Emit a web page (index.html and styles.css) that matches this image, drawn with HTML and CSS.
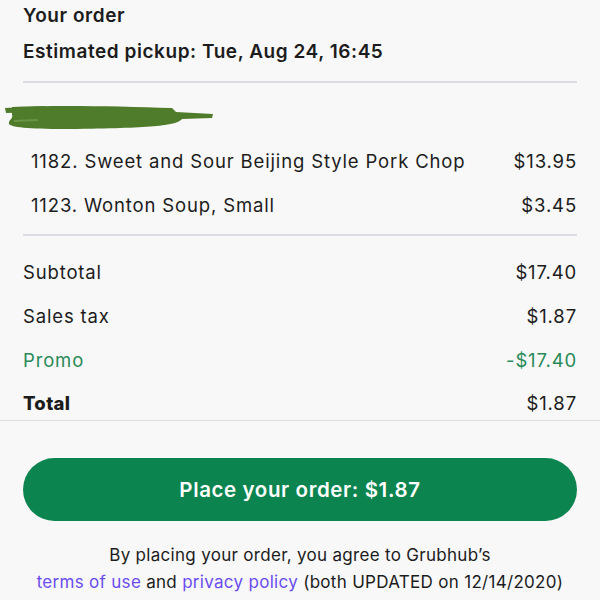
FILE: index.html
```html
<!DOCTYPE html>
<html>
<head>
<meta charset="utf-8">
<link rel="stylesheet" href="styles.css">
</head>
<body>
<div class="page">
  <section class="header">
    <div class="title">Your order</div>
    <div class="pickup">Estimated pickup: Tue, Aug 24, 16:45</div>
  </section>
  <hr class="divider">
  <div class="scribble">
    <svg width="220" height="26" viewBox="0 0 220 26">
      <path d="M12 3 C50 1 120 2 172 4 L176 8 L213 10 L212 14 L182 15 C176 22 150 24 70 25 C35 25 12 24 9 20 C8 16 14 14 12 11 Z" fill="#4f7c2b"/>
      <path d="M5 4 L45 2 L46 8 L6 9 Z" fill="#4f7c2b"/>
      <path d="M14 16 L38 15 L38 17 L14 18 Z" fill="#6a9448"/>
    </svg>
  </div>
  <section class="items">
    <div class="row item"><span>1182. Sweet and Sour Beijing Style Pork Chop</span><span>$13.95</span></div>
    <div class="row item"><span>1123. Wonton Soup, Small</span><span>$3.45</span></div>
  </section>
  <hr class="divider">
  <section class="totals">
    <div class="row"><span>Subtotal</span><span>$17.40</span></div>
    <div class="row"><span>Sales tax</span><span>$1.87</span></div>
    <div class="row promo"><span>Promo</span><span>-$17.40</span></div>
    <div class="row total"><span class="strong">Total</span><span>$1.87</span></div>
  </section>
  <div class="footer">
    <button class="place">Place your order: $1.87</button>
    <p class="legal">By placing your order, you agree to Grubhub’s<br><a class="link">terms of use</a> and <a class="link">privacy policy</a> (both UPDATED on 12/14/2020)</p>
  </div>
</div>
</body>
</html>
```
FILE: styles.css
```css
html, body {
  margin: 0;
  padding: 0;
  background: #f8f8f8;
}
body {
  font-family: "Inter", "Liberation Sans", sans-serif;
  color: #1c1c1c;
  width: 600px;
  height: 600px;
  overflow: hidden;
}
.page {
  display: flex;
  flex-direction: column;
}
.header {
  padding: 5px 23px 0;
  display: flex;
  flex-direction: column;
  gap: 14px;
}
.title, .pickup {
  font-weight: 600;
  font-size: 19px;
  line-height: 22px;
  letter-spacing: 0.55px;
}
.divider {
  border: none;
  height: 2px;
  background: #dcdce4;
  margin: 0 23px;
}
.header + .divider {
  margin-top: 18px;
}
.scribble {
  height: 26px;
  margin-top: 21px;
}
.scribble svg { display: block; }
.items {
  padding: 9px 23px 0 31px;
  display: flex;
  flex-direction: column;
}
.row {
  display: flex;
  justify-content: space-between;
  align-items: center;
  height: 44px;
  font-size: 18.5px;
  letter-spacing: 0.85px;
}
.items + .divider {
  margin-top: 7px;
}
.totals {
  padding: 14px 23px 0;
  display: flex;
  flex-direction: column;
  border-bottom: 1px solid #dedede;
}
.promo { color: #2a8a58; }
.strong { font-weight: 800; letter-spacing: 0.3px; }
.total {
  height: 38px;
  box-sizing: border-box;
  padding-top: 4px;
}
.footer {
  padding: 37px 23px 0;
  display: flex;
  flex-direction: column;
  align-items: center;
}
.place {
  width: 100%;
  height: 63px;
  border: none;
  border-radius: 32px;
  background: #0b8450;
  color: #fff;
  font-family: inherit;
  font-weight: 600;
  font-size: 20.5px;
  letter-spacing: 0.6px;
}
.legal {
  margin: 21px 0 0;
  text-align: center;
  font-size: 17px;
  line-height: 27px;
  letter-spacing: 0.3px;
}
.link { color: #6a4cf0; }
```
